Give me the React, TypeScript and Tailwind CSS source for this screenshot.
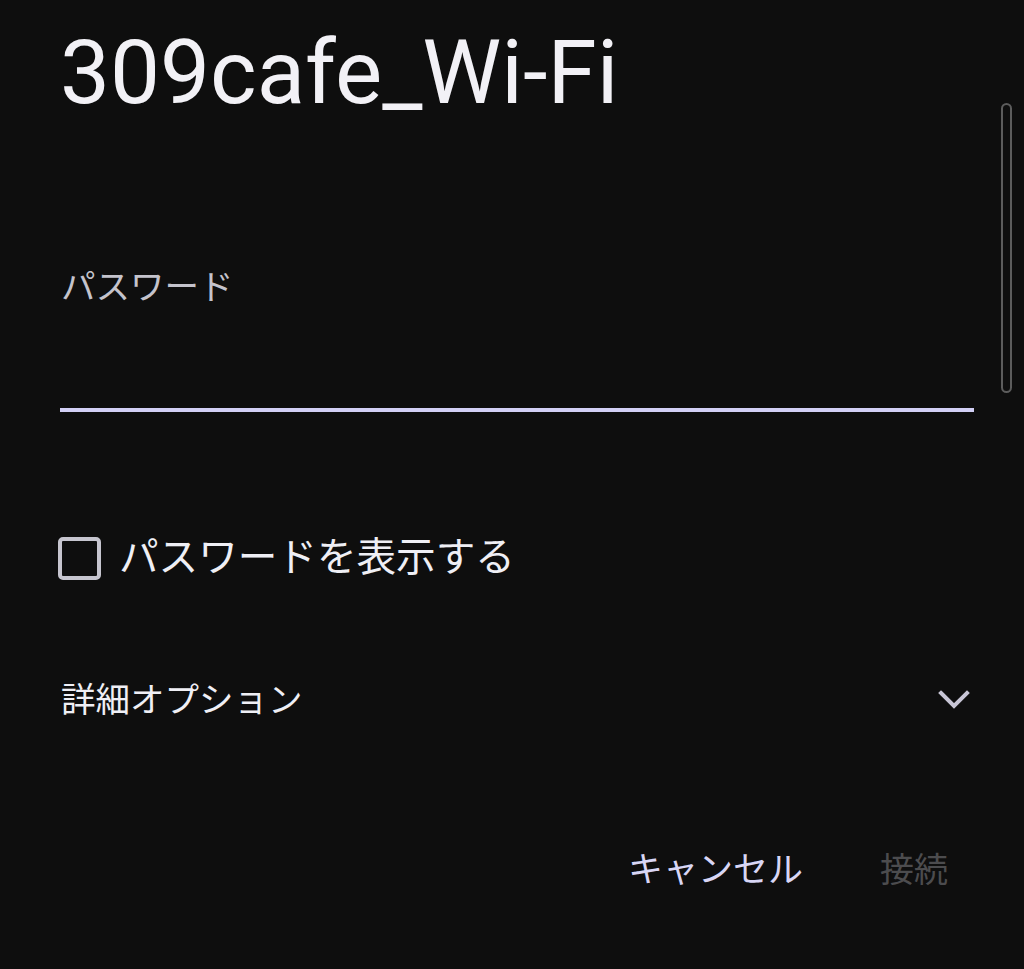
import React from "react";

export default function App() {
  const cjk = { fontFamily: "Roboto, 'Noto Sans CJK JP', sans-serif" };
  return (
    <div
      className="relative w-[1024px] h-[969px] overflow-hidden bg-[#0e0e0e]"
      style={cjk}
    >
      <div className="flex flex-col">
        <div className="h-[262px] pl-[60px] pt-[28px]">
          <div className="text-[89px] leading-none text-[#f2f1f6] font-normal">
            309cafe_Wi-Fi
          </div>
        </div>
        <div className="h-[50px] flex items-center pl-[61px] text-[34.5px] leading-none text-[#c4c3cc]">
          パスワード
        </div>
        <div className="h-[96px]" />
        <div className="ml-[60px] w-[914px] h-[4px] bg-[#d2d0f5]" />
        <div className="h-[116px]" />
        <div className="h-[60px] flex items-center pl-[58px]">
          <div className="w-[43px] h-[43px] rounded-[5px] border-[4px] border-[#c6c5cf]" />
          <span className="ml-[18px] text-[39.6px] leading-none text-[#efeff5]">
            パスワードを表示する
          </span>
        </div>
        <div className="h-[82px]" />
        <div className="h-[60px] flex items-center justify-between pl-[61px] pr-[54px]">
          <span className="text-[34.5px] leading-none text-[#efeff5]">詳細オプション</span>
          <svg width="32" height="20" viewBox="0 0 32 20">
            <polyline
              points="3,3 16,16 29,3"
              fill="none"
              stroke="#c8c6d6"
              strokeWidth="4"
              strokeLinecap="square"
            />
          </svg>
        </div>
        <div className="h-[110px]" />
        <div className="h-[60px] flex items-center justify-end pr-[76px] gap-[77px]">
          <span className="text-[35px] leading-none text-[#d8d6f5]">キャンセル</span>
          <span className="text-[34px] leading-none text-[#4c4c4e]">接続</span>
        </div>
      </div>
      <div className="absolute left-[1001px] top-[103px] w-[11px] h-[290px] rounded-full border-2 border-[#5c5c5c]" />
    </div>
  );
}
